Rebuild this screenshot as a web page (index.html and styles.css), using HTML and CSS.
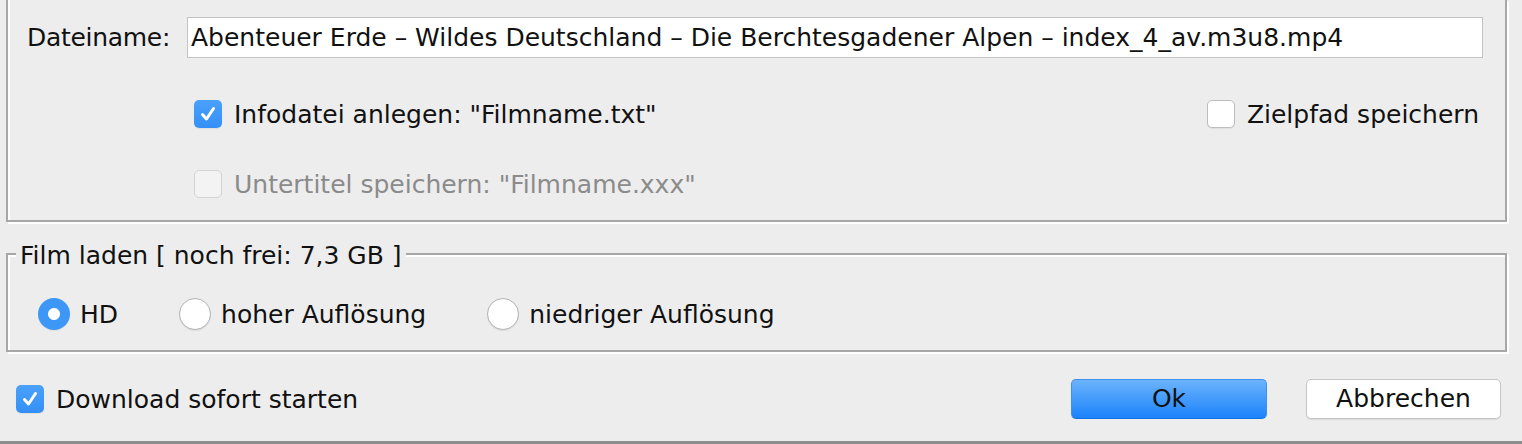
FILE: index.html
```html
<!DOCTYPE html>
<html lang="de">
<head>
<meta charset="utf-8">
<title>Film speichern</title>
<link rel="stylesheet" href="styles.css">
</head>
<body>
<div class="dialog">
  <section class="panel top-panel">
    <div class="name-row">
      <label class="name-label">Dateiname:</label>
      <div class="text-field">Abenteuer Erde – Wildes Deutschland – Die Berchtesgadener Alpen – index_4_av.m3u8.mp4</div>
    </div>
    <div class="check-row">
      <div class="check">
        <span class="box checked"><svg viewBox="0 0 28 28" width="28" height="28"><path d="M8.5 14.5 L12.5 19 L19.5 8.5" fill="none" stroke="#fff" stroke-width="3" stroke-linecap="round" stroke-linejoin="round"/></svg></span>
        <span class="lbl">Infodatei anlegen: "Filmname.txt"</span>
      </div>
      <div class="check">
        <span class="box"></span>
        <span class="lbl">Zielpfad speichern</span>
      </div>
    </div>
    <div class="check-row sub-row">
      <div class="check disabled">
        <span class="box"></span>
        <span class="lbl">Untertitel speichern: "Filmname.xxx"</span>
      </div>
    </div>
  </section>

  <fieldset class="panel film-panel">
    <legend class="film-title">Film laden [ noch frei: 7,3 GB ]</legend>
    <div class="radio-row">
      <div class="radio"><span class="dot checked"></span><span class="lbl">HD</span></div>
      <div class="radio"><span class="dot"></span><span class="lbl">hoher Auflösung</span></div>
      <div class="radio"><span class="dot"></span><span class="lbl">niedriger Auflösung</span></div>
    </div>
  </fieldset>

  <div class="footer">
    <div class="check">
      <span class="box checked"><svg viewBox="0 0 28 28" width="28" height="28"><path d="M8.5 14.5 L12.5 19 L19.5 8.5" fill="none" stroke="#fff" stroke-width="3" stroke-linecap="round" stroke-linejoin="round"/></svg></span>
      <span class="lbl">Download sofort starten</span>
    </div>
    <div class="buttons">
      <button class="btn btn-ok">Ok</button>
      <button class="btn btn-cancel">Abbrechen</button>
    </div>
  </div>
</div>
</body>
</html>
```
FILE: styles.css
```css
* { box-sizing: border-box; }

html, body {
  margin: 0;
  padding: 0;
}

body {
  width: 1522px;
  height: 444px;
  overflow: hidden;
  background: #ededed;
  font-family: "DejaVu Sans", "Liberation Sans", sans-serif;
  font-size: 25px;
  color: #111;
}

.dialog {
  height: 444px;
  display: flex;
  flex-direction: column;
  border-bottom: 3px solid #8e8e8e;
}

.panel {
  border: 2px solid #a7a7a7;
  box-shadow: 2px 2px 0 #fff, inset 2px 2px 0 #fff;
}

/* top panel: top edge lies above the visible area */
.top-panel {
  margin: 0 15px 0 6px;
  border-top: none;
  padding: 17px 22px 16px 19px;
  box-shadow: 2px 2px 0 #fff, inset 2px 0 0 #fff;
}

.name-row {
  display: flex;
  align-items: center;
  height: 41px;
}

.name-label {
  width: 160px;
  flex: none;
  letter-spacing: -0.3px;
}

.text-field {
  flex: 1;
  height: 41px;
  background: #fff;
  border: 1px solid #c3c3c3;
  padding: 0 3px;
  line-height: 39px;
  white-space: nowrap;
  overflow: hidden;
}

.check-row {
  display: flex;
  justify-content: space-between;
  align-items: center;
  height: 40px;
  margin-top: 36px;
  padding-left: 167px;
  padding-right: 4px;
}

.sub-row { margin-top: 30px; }

.check {
  display: flex;
  align-items: center;
  gap: 12px;
}

.box {
  width: 28px;
  height: 28px;
  flex: none;
  border-radius: 5px;
  background: #fff;
  border: 1px solid #bdbdbd;
  box-shadow: 0 1px 1px rgba(0,0,0,0.06);
}

.box svg { display: block; margin: -1px; }

.box.checked {
  border: none;
  background: linear-gradient(#4aa1fb, #3590f6);
}

.box.checked svg { margin: 0; }

.check.disabled .box {
  background: #f3f3f3;
  border-color: #d4d4d4;
  box-shadow: none;
}

.check.disabled .lbl { color: #8b8b8b; }

/* film panel */
.film-panel {
  margin: 18px 15px 0 6px;
  padding: 30px 0 20px 30px;
  min-width: 0;
}

.film-title {
  padding: 0 4px;
  margin-left: -22px;
  background: #ededed;
  line-height: 28px;
  position: relative;
  top: 2px;
}

.radio-row {
  display: flex;
  align-items: center;
  gap: 61px;
  height: 32px;
}

.radio {
  display: flex;
  align-items: center;
  gap: 10px;
}

.dot {
  width: 32px;
  height: 32px;
  flex: none;
  border-radius: 50%;
  background: #fff;
  border: 1px solid #b4b4b4;
  box-shadow: 0 1px 1px rgba(0,0,0,0.08);
}

.dot.checked {
  border: none;
  background: radial-gradient(circle, #fff 0 5.5px, #3d97f7 6.5px);
}

/* footer */
.footer {
  display: flex;
  justify-content: space-between;
  align-items: center;
  padding: 0 21px 0 16px;
  margin-top: 27px;
  height: 40px;
}

.buttons {
  display: flex;
  gap: 39px;
}

.btn {
  height: 40px;
  width: 196px;
  border-radius: 5px;
  font: inherit;
  color: #111;
  padding: 0;
  line-height: 38px;
}

.btn-ok {
  background: linear-gradient(#6cb3fb, #1b83fb);
  border: 1px solid #3f8ff0;
  border-bottom-color: #1270e8;
}

.btn-cancel {
  width: 195px;
  background: #fff;
  border: 1px solid #c6c6c6;
  box-shadow: 0 1px 1px rgba(0,0,0,0.08);
}
```
